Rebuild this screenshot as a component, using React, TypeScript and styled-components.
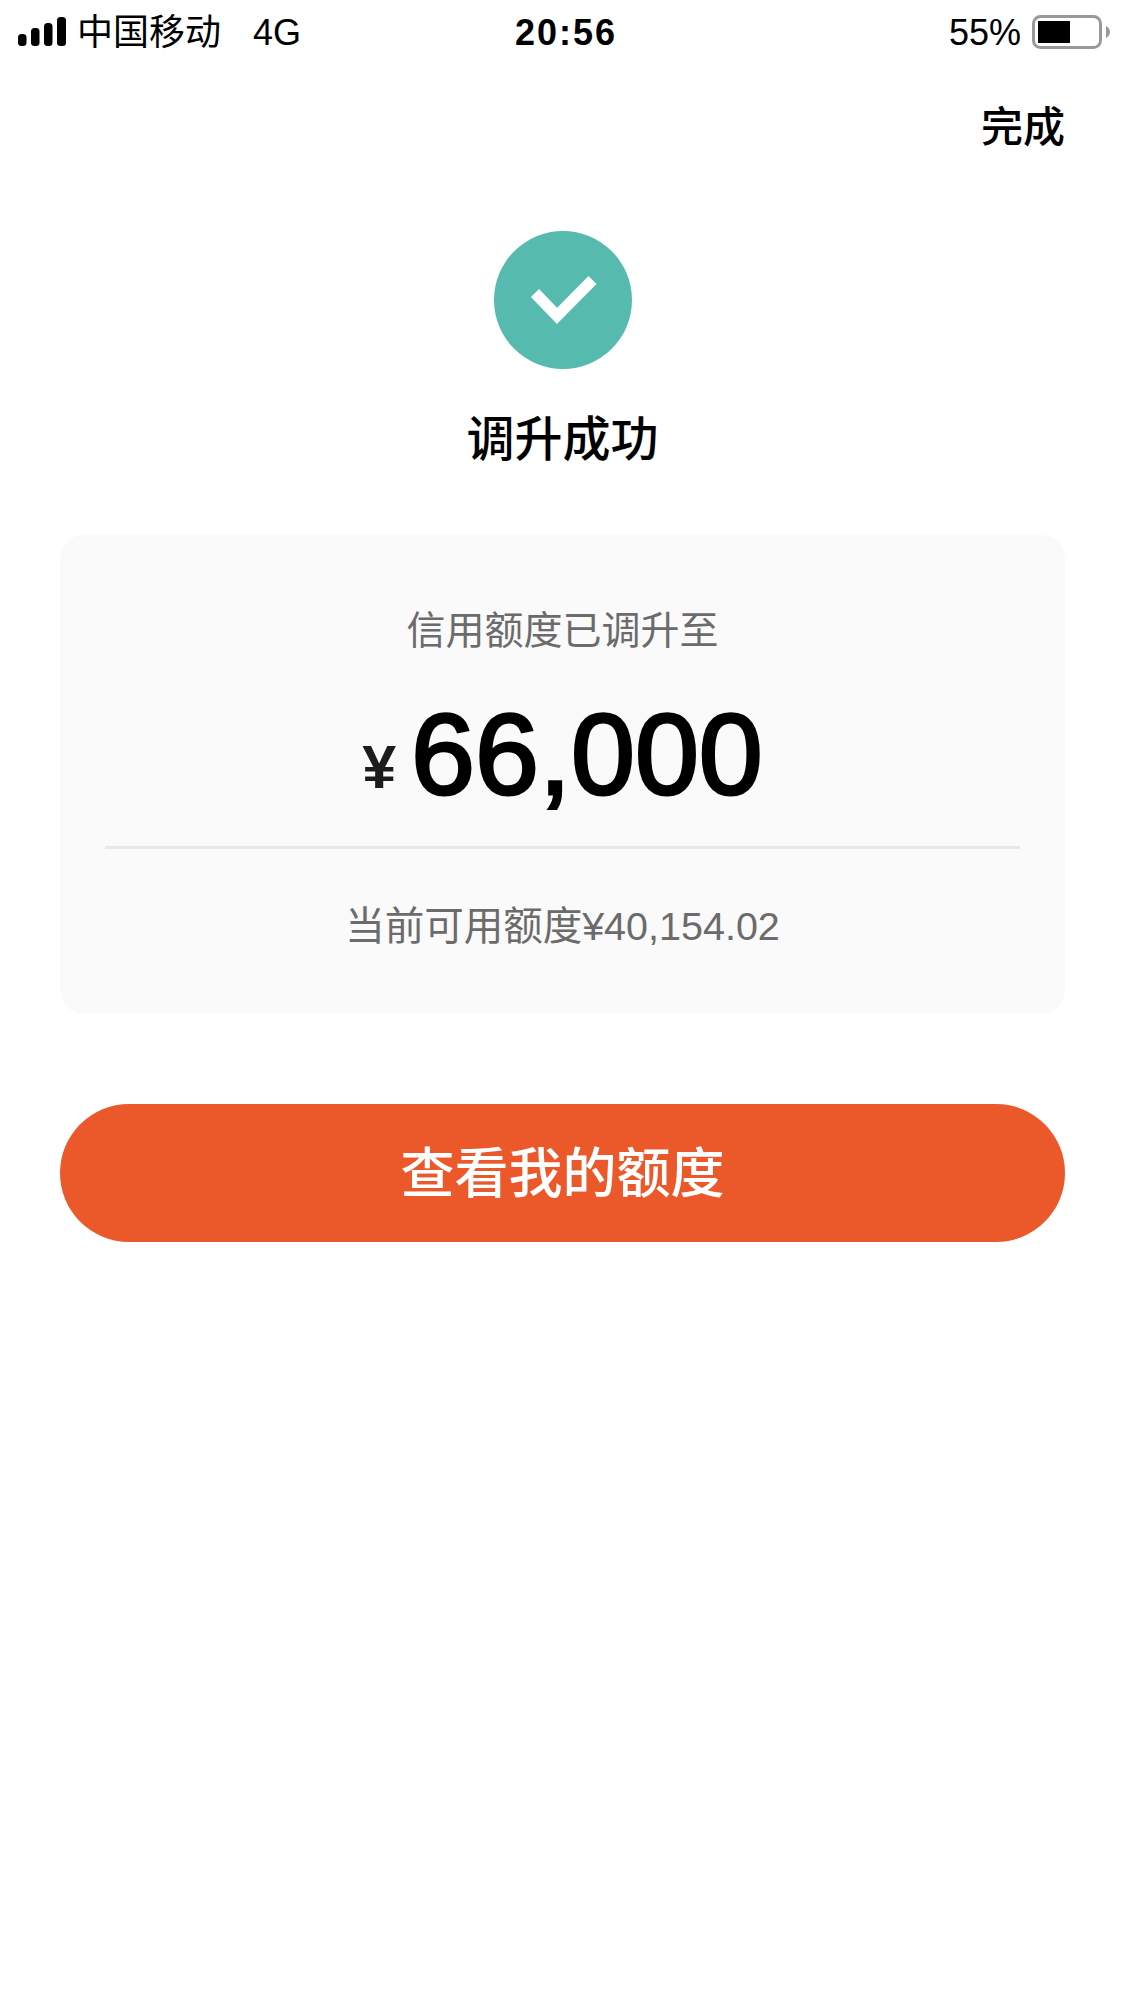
import React from 'react';
import styled, { createGlobalStyle } from 'styled-components';

const GlobalStyle = createGlobalStyle`
  html, body {
    margin: 0;
    padding: 0;
    background: #fff;
    font-family: "Liberation Sans", "Noto Sans CJK SC", sans-serif;
  }
`;

const Page = styled.div`
  width: 1125px;
  height: 2001px;
  overflow: hidden;
  background: #fff;
  display: flex;
  flex-direction: column;
`;

const StatusBar = styled.div`
  height: 60px;
  box-sizing: border-box;
  padding: 0 15px 0 18px;
  display: grid;
  grid-template-columns: 1fr auto 1fr;
  align-items: center;
  color: #000;
`;

const StatusLeft = styled.div`
  display: flex;
  align-items: center;
`;

const StatusRight = styled.div`
  display: flex;
  align-items: center;
  justify-content: flex-end;
`;

const StatusText = styled.span<{ $gap?: number }>`
  font-size: 36px;
  line-height: 60px;
  padding-top: 3px;
  margin-left: ${(p) => p.$gap ?? 0}px;
`;

const Clock = styled.span`
  font-size: 36px;
  font-weight: 700;
  letter-spacing: 2px;
  padding-top: 2px;
  margin-left: 4px;
`;

const NavBar = styled.div`
  height: 74px;
  padding: 0 60px;
  margin-top: 26px;
  display: flex;
  align-items: center;
  justify-content: flex-end;
`;

const DoneLink = styled.span`
  font-size: 42px;
  font-weight: 500;
  color: #000;
`;

const Result = styled.div`
  margin-top: 71px;
  display: flex;
  flex-direction: column;
  align-items: center;
`;

const CheckCircle = styled.div`
  width: 138px;
  height: 138px;
  border-radius: 50%;
  background: #56bbae;
  display: flex;
  align-items: center;
  justify-content: center;
`;

const ResultTitle = styled.h1`
  margin: 40px 0 0;
  font-size: 48px;
  line-height: 62px;
  font-weight: 500;
  color: #000;
`;

const Card = styled.div`
  margin: 64px 60px 0;
  height: 479px;
  box-sizing: border-box;
  padding: 0 45px;
  border-radius: 24px;
  background: #fafafa;
  display: flex;
  flex-direction: column;
  align-items: stretch;
`;

const CardLabel = styled.div<{ $top: number; $size: number }>`
  margin-top: ${(p) => p.$top}px;
  font-size: ${(p) => p.$size}px;
  line-height: 56px;
  text-align: center;
  color: #6b6b6b;
`;

const Amount = styled.div`
  margin-top: 30px;
  height: 130px;
  display: flex;
  align-items: baseline;
  justify-content: center;
`;

const Currency = styled.span`
  font-size: 61px;
  font-weight: 700;
  color: #1c1c1c;
  margin-right: 15px;
  transform: translateY(-6px);
`;

const AmountValue = styled.span`
  font-size: 115px;
  line-height: 130px;
  color: #000;
  -webkit-text-stroke: 3px #000;
`;

const Divider = styled.div`
  margin-top: 27px;
  height: 3px;
  background: #e8e8e8;
`;

const PrimaryButton = styled.button`
  margin: 90px 60px 0;
  height: 138px;
  padding: 0 0 7px;
  border: none;
  border-radius: 69px;
  background: #eb5829;
  color: #fff;
  font-family: inherit;
  font-size: 54px;
  font-weight: 500;
`;

const IconSlot = styled.svg<{ $gap?: number }>`
  display: block;
  margin-left: ${(p) => p.$gap ?? 0}px;
`;

const SignalIcon = () => (
  <IconSlot width="48" height="29" viewBox="0 0 48 29">
    <rect x="0" y="17" width="8.5" height="12" rx="3.5" fill="#000" />
    <rect x="13" y="11" width="8.5" height="18" rx="3.5" fill="#000" />
    <rect x="26" y="6" width="8.5" height="23" rx="3.5" fill="#000" />
    <rect x="39" y="0" width="9" height="29" rx="3.5" fill="#000" />
  </IconSlot>
);

const BatteryIcon = () => (
  <IconSlot $gap={11} width="78" height="34" viewBox="0 0 78 34">
    <rect x="1.5" y="1.5" width="67" height="31" rx="7" fill="none" stroke="#999" strokeWidth="3" />
    <rect x="6" y="6" width="32" height="22" fill="#000" />
    <path d="M74 11 C76.5 12 78 14.5 78 17 C78 19.5 76.5 22 74 23 Z" fill="#999" />
  </IconSlot>
);

const CheckIcon = () => (
  <IconSlot width="68" height="50" viewBox="0 0 68 50">
    <path d="M6 18 L28 41 L63.5 5" fill="none" stroke="#fff" strokeWidth="11.3" />
  </IconSlot>
);

export default function App() {
  return (
    <Page>
      <GlobalStyle />
      <StatusBar>
        <StatusLeft>
          <SignalIcon />
          <StatusText $gap={11}>中国移动</StatusText>
          <StatusText $gap={32}>4G</StatusText>
        </StatusLeft>
        <Clock>20:56</Clock>
        <StatusRight>
          <StatusText>55%</StatusText>
          <BatteryIcon />
        </StatusRight>
      </StatusBar>

      <NavBar>
        <DoneLink>完成</DoneLink>
      </NavBar>

      <Result>
        <CheckCircle>
          <CheckIcon />
        </CheckCircle>
        <ResultTitle>调升成功</ResultTitle>
      </Result>

      <Card>
        <CardLabel $top={68} $size={39}>信用额度已调升至</CardLabel>
        <Amount>
          <Currency>¥</Currency>
          <AmountValue>66,000</AmountValue>
        </Amount>
        <Divider />
        <CardLabel $top={49} $size={39.5}>当前可用额度¥40,154.02</CardLabel>
      </Card>

      <PrimaryButton>查看我的额度</PrimaryButton>
    </Page>
  );
}
